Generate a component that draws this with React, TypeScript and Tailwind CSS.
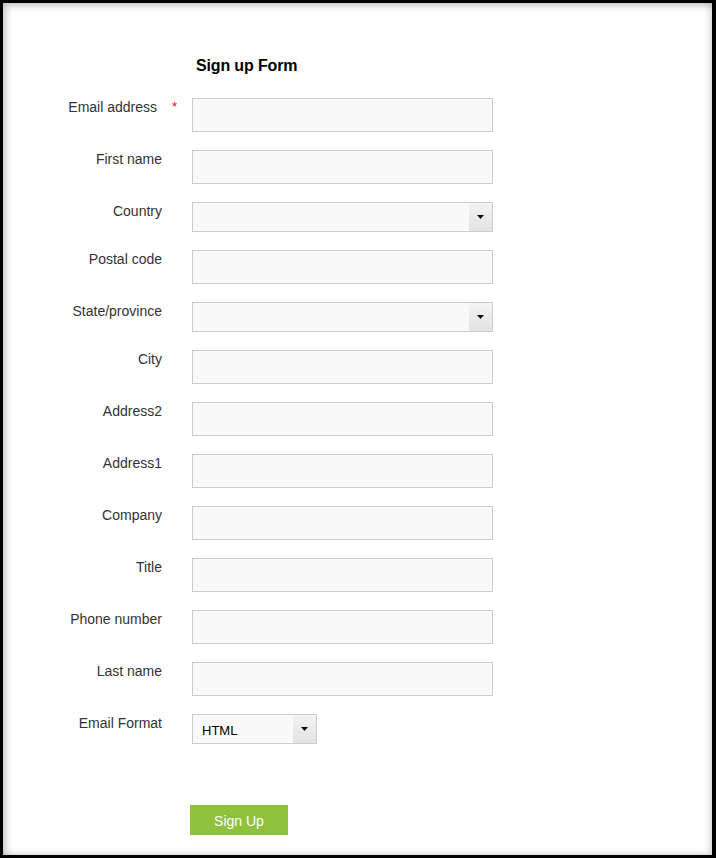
import React from 'react';

const font = { fontFamily: '"Liberation Sans", Arial, sans-serif' };

type Field = { label: string; kind: 'text' | 'select'; required?: boolean };

const fields: Field[] = [
  { label: 'Email address', kind: 'text', required: true },
  { label: 'First name', kind: 'text' },
  { label: 'Country', kind: 'select' },
  { label: 'Postal code', kind: 'text' },
  { label: 'State/province', kind: 'select' },
  { label: 'City', kind: 'text' },
  { label: 'Address2', kind: 'text' },
  { label: 'Address1', kind: 'text' },
  { label: 'Company', kind: 'text' },
  { label: 'Title', kind: 'text' },
  { label: 'Phone number', kind: 'text' },
  { label: 'Last name', kind: 'text' },
];

const Caret = () => (
  <svg width="7" height="4" viewBox="0 0 7 4">
    <path d="M0 0h7L3.5 4z" fill="#111" />
  </svg>
);

const SelectBox = ({ width, value }: { width: string; value?: string }) => (
  <div className={`${width} h-[30px] flex border border-[#cccccc] bg-[#f9f9f9]`}>
    <div className="flex-1 flex items-center pl-[9px] pt-[3px] text-[13px] text-black">{value}</div>
    <div className="w-[23px] flex items-center justify-center bg-gradient-to-b from-[#f4f4f4] to-[#e2e2e2]">
      <Caret />
    </div>
  </div>
);

export default function App() {
  return (
    <div
      style={font}
      className="w-[716px] h-[858px] bg-white border-black border-t-[3px] border-l-[3px] border-r-[4px] border-b-[3px] shadow-[inset_3px_3px_7px_rgba(0,0,0,0.22),inset_-3px_-2px_6px_rgba(0,0,0,0.12)]"
    >
      <div className="pt-[53px]">
        <h2 className="ml-[193px] text-[16px] leading-[20px] font-bold tracking-[-0.15px] text-black">Sign up Form</h2>

        <div className="mt-[22px] flex flex-col">
          {fields.map((f) => (
            <div key={f.label} className="flex mb-[18px]">
              <div className="relative w-[159px] pt-[1px] text-right text-[14px] leading-[16px] text-[#333333]">
                <span className={f.required ? 'mr-[5px]' : ''}>{f.label}</span>
                {f.required && (
                  <span className="absolute right-[-15px] top-[1px] text-[#e8001c] text-[13px]">*</span>
                )}
              </div>
              <div className="ml-[30px]">
                {f.kind === 'text' ? (
                  <input
                    className="block w-[301px] h-[34px] border border-[#cccccc] bg-[#f9f9f9] outline-none"
                    type="text"
                  />
                ) : (
                  <SelectBox width="w-[301px]" />
                )}
              </div>
            </div>
          ))}

          <div className="flex">
            <div className="w-[159px] pt-[1px] text-right text-[14px] leading-[16px] text-[#333333]">
              Email Format
            </div>
            <div className="ml-[30px]">
              <SelectBox width="w-[125px]" value="HTML" />
            </div>
          </div>
        </div>

        <button className="ml-[187px] mt-[61px] w-[98px] h-[30px] pt-[2px] bg-[#8fc13c] text-white text-[14px]">
          Sign Up
        </button>
      </div>
    </div>
  );
}
